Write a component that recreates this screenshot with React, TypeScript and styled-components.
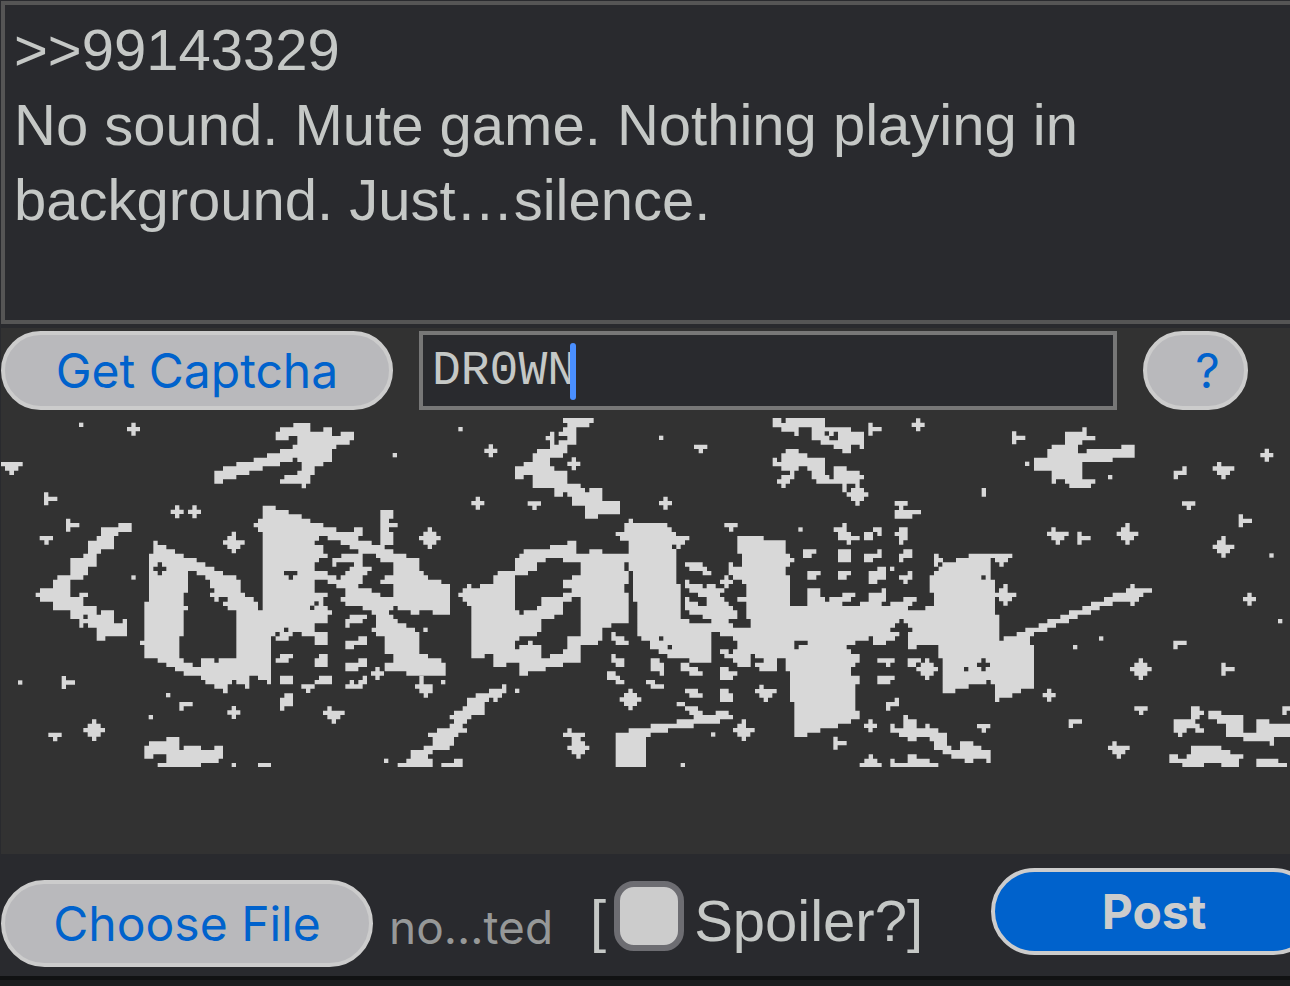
import React from "react";
import styled, { createGlobalStyle, css } from "styled-components";

const GlobalStyle = createGlobalStyle`
  * { box-sizing: border-box; }
  html { background: #1b1e1f; }
  body { margin: 0; overflow-x: hidden; font-family: "Liberation Sans", Arial, sans-serif; }
`;

const Form = styled.form`
  display: flex;
  flex-direction: column;
  overflow: hidden;
  padding: 1px 0 0 1px;
  background: #292a2e;
  border-bottom: 4px solid #111213;
  color: #c5c8c6;
`;

const Comment = styled.textarea`
  display: block;
  width: calc(100% + 24px);
  height: 323px;
  margin: 0 0 4px;
  padding: 7px 9px;
  border: 4px solid #555555;
  border-radius: 0;
  outline: none;
  resize: none;
  overflow: hidden;
  background: #292a2e;
  color: #c5c8c6;
  font: 58px/75px "Liberation Sans", Arial, sans-serif;
`;

const CaptchaPanel = styled.section`
  padding: 3px 0 87px;
  background: #323232;
`;

const CaptchaRow = styled.div`
  display: flex;
  gap: 26px;
  padding-right: 42px;
  margin-bottom: 8px;
`;

const PillButton = styled.button<{ $primary?: boolean; $tall?: boolean }>`
  flex: none;
  height: ${(p) => (p.$tall ? 87 : 79)}px;
  padding: 0 48px;
  border: 4px solid #cccccc;
  border-radius: 44px;
  background: #b9b9bc;
  color: #0062cc;
  font: 400 48px/56px Inter, sans-serif;
  white-space: nowrap;
  ${(p) =>
    p.$primary &&
    css`
      background: #0062cc;
      color: #cccccc;
      font-weight: 700;
    `}
`;

const GetButton = styled(PillButton)`
  width: 392px;
`;

const HelpButton = styled(PillButton)`
  width: 105px;
  padding: 0 0 0 24px;
`;

const ChooseButton = styled(PillButton)`
  width: 372px;
`;

const PostButton = styled(PillButton)`
  width: 326px;
  margin-right: -27px;
  align-self: flex-start;
`;

const Field = styled.div`
  position: relative;
  flex: 1;
`;

const CaptchaInput = styled.input`
  display: block;
  width: 100%;
  height: 79px;
  padding: 0 9px;
  border: 4px solid #777777;
  border-radius: 0;
  outline: none;
  background: #292a2e;
  color: #c5c8c6;
  font: 48px/56px "Liberation Mono", "Courier New", monospace;
`;

const Caret = styled.span`
  position: absolute;
  left: 151px;
  top: 12px;
  width: 6px;
  height: 57px;
  border-radius: 3px;
  background: #4a8fff;
`;

const Challenge = styled.svg`
  display: block;
  width: 100%;
  height: auto;
  fill: #d8d8d8;
`;

const Footer = styled.footer`
  display: flex;
  align-items: flex-end;
  min-height: 122px;
  padding: 14px 0 9px;
`;

const FileName = styled.span`
  width: 202px;
  padding: 0 0 12px 16px;
  color: #969898;
  font: 46px/56px Inter, sans-serif;
  white-space: nowrap;
`;

const Spoiler = styled.label`
  display: flex;
  align-items: center;
  flex: 1;
  height: 92px;
  padding-left: 15px;
  font-size: 58px;
  line-height: 64px;
  white-space: nowrap;
`;

const Check = styled.input`
  appearance: none;
  flex: none;
  width: 70px;
  height: 70px;
  margin: 0 10px 10px 8px;
  border: 6px solid #6d6d72;
  border-radius: 20px;
  background: #cccccc;
`;

type Speck = "dot" | "plus" | "diamond" | "star" | "kite" | "tee" | "side" | "corner";

const speckPath: Record<Speck, string> = {
  dot: "M-7-7h13v13h-13z",
  plus: "M-7-20h13v13h13v13h-13v13h-13v-13h-13v-13h13z",
  diamond: "M-7-33h13v13h13v13h13v13h-13v13h-13v13h-13v-13h-13v-13h-13v-13h13v-13h13z",
  star: "M-7-33h13v26h26v13h-13v13h-13v13h-13v-13h-13v-13h-13v-13h13v-13h13z",
  kite: "M-20-26h13v13h39v13h-13v13h-13v13h-13v-13h-13v-13h-13v-13h13z",
  tee: "M-20-13h40v13h-13v13h-13v-13h-14z",
  side: "M-20-20h13v13h27v13h-27v13h-13z",
  corner: "M-20-13h40v13h-27v13h-13z",
};

type Mark = [Speck, number, number];

const light: Mark[] = [
  ["dot", 244, 45], ["plus", 401, 58], ["side", 152, 267], ["side", 218, 346], ["tee", 139, 391],
  ["plus", 532, 306], ["plus", 584, 306], ["star", 702, 398], ["dot", 401, 503], ["dot", 61, 818],
  ["side", 205, 818], ["dot", 505, 856], ["corner", 558, 889], ["dot", 453, 922], ["plus", 702, 908],
  ["diamond", 283, 961], ["tee", 165, 981], ["dot", 702, 1066], ["tee", 924, 836],
  ["dot", 1382, 58], ["dot", 1185, 136], ["plus", 1473, 123], ["plus", 1434, 280], ["tee", 1603, 287],
  ["diamond", 1290, 385], ["plus", 1722, 162], ["dot", 1277, 660], ["plus", 1133, 791], ["dot", 1330, 817],
  ["dot", 1552, 843], ["diamond", 1892, 869], ["dot", 1159, 1053], ["kite", 1002, 915],
  ["dot", 1984, 84], ["tee", 2102, 117], ["plus", 1997, 280], ["side", 2625, 58], ["plus", 2755, 45],
  ["tee", 2193, 352], ["dot", 2402, 359], ["dot", 2677, 477], ["plus", 2180, 516], ["kite", 2298, 850],
  ["star", 2232, 961], ["dot", 2140, 974], ["dot", 2049, 1066], ["plus", 2612, 948], ["side", 2520, 1000],
  ["diamond", 2782, 778],
  ["side", 3056, 84], ["dot", 3082, 162], ["dot", 3331, 202], ["plus", 3801, 136], ["kite", 3671, 182],
  ["tee", 3566, 287], ["side", 3736, 333], ["kite", 3174, 378], ["side", 3252, 385], ["star", 3383, 372],
  ["star", 3671, 411], ["dot", 3815, 437], ["star", 3017, 555], ["plus", 3749, 568], ["dot", 3841, 634],
  ["dot", 3304, 686], ["dot", 3226, 712], ["corner", 3540, 705], ["diamond", 3423, 778], ["side", 3684, 778],
  ["plus", 3148, 856], ["tee", 3423, 902], ["tee", 2951, 955], ["corner", 3226, 941], ["kite", 3357, 1020],
  ["corner", 3867, 902],
];

const dark: Mark[] = [
  ["plus", 480, 477], ["tee", 872, 496], ["dot", 950, 581], ["dot", 937, 594], ["dot", 859, 660],
  ["dot", 833, 673], ["dot", 257, 621], ["dot", 2023, 411], ["dot", 1984, 686], ["dot", 2010, 712],
  ["dot", 2821, 464], ["dot", 2899, 778], ["dot", 2193, 503], ["dot", 2951, 503], ["plus", 2951, 765],
  ["dot", 2481, 71], ["dot", 2755, 765], ["corner", 2403, 705],
];

const blobs: { x: number; d: string }[] = [
  {
    x: 0,
    d: `M827 65H840V52H880V39H931V65H970V52H996V78H1022V65H1062V91H1049V104H1009V117H996V156H970V169H944V195H931V221H918V235H905V221H840V208H853V195H892V182H905V156H892V143H878V156H840V169H788V182H748V195H709V208H669V221H643V182H669V169H709V156H761V143H801V130H840V117H878V104H892V78H866V91H827Z
    M0 156H68V169H55V182H42V195H28V182H15V169H0Z
    M355 339H395V366H355V378H342V418H303V431H290V470H264V496H250V509H211V561H238V548H264V561H250V588H290V614H303V601H342V640H368V627H381V679H316V692H290V653H264V640H250V653H238V627H211V601H159V575H120V561H107V548H120V535H159V509H172V496H211V444H250V431H264V392H290V378H303V352H355Z
    M460 392H473V405H499V418H525V431H551V444H590V457H616V470H643V483H669V496H709V509H722V548H735V561H761V575H774V601H788V366H774V352H761V339H774V326H788V287H827V300H866V313H905V326H931V339H970V352H1009V366H1062V352H1088V378H1075V392H1115V405H1141V300H1180V326H1167V339H1193V352H1167V366H1180V405H1154V418H1180V431H1219V444H1258V483H1271V496H1284V509H1324V522H1350V614H1298V601H1258V614H1232V601H1193V588H1180V601H1167V614H1180V627H1193V640H1219V653H1245V666H1258V732H1284V745H1324V758H1337V797H1219V784H1154V758H1180V732H1154V679H1128V666H1115V653H1128V614H1115V601H1088V588H1036V575H1022V561H1036V535H1009V522H983V509H944V548H983V561H970V588H983V601H996V614H983V640H944V679H905V666H878V679H866V692H827V679H813V823H801V810H774V797H748V836H735V823H709V810H696V823H683V850H669V836H643V823H616V810H603V797H551V784H525V771H499V758H473V745H433V705H420V692H433V575H447V431H460Z
    M957 378H983V391H1022V405H1049V418H1075V431H1024V444H997V470H1009V457H1062V470H1049V483H1036V496H1022V509H1009V496H983V483H944V457H957V444H983V431H970V405H944V392H957Z
    M1088 431H1128V444H1141V457H1180V496H1154V509H1141V522H1180V561H1141V548H1115V535H1075V522H1088V496H1102V483H1115V470H1088Z
    M564 483H590V496H616V509H630V535H643V548H630V561H643V575H656V561H683V575H669V588H683V601H709V745H656V758H643V745H603V771H578V758H551V745H538V679H551V601H564V588H551V548H564Z
    M944 666H983V705H944Z M840 732H879V745H866V758H827V745H840Z M957 732H983V771H944V745H957Z M840 797H879V823H840Z M957 797H996V823H944V810H957Z M853 850H879V889H853V902H840V863H853Z
    M499 981H538V1020H551V1007H603V1020H643V1007H669V1046H656V1059H603V1072H473V1059H499V1033H460V1046H433V1007H447V994H499Z M774 1059H813V1072H774Z`,
  },
  {
    x: 960,
    d: `M729 24H821V39H808V52H769V104H742V130H729V143H690V169H703V182H742V221H782V234H795V247H808V234H847V273H900V313H834V326H795V287H756V260H742V247H729V260H703V234H638V195H611V208H585V169H611V156H638V130H651V117H690V91H677V78H690V65H703V104H716V91H742V78H716V65H729V52H742V39H729Z
    M89 614H141V627H128V640H89V653H76V627H89Z M115 679H141V705H102V718H76V692H115Z M115 745H141V771H115V784H76V758H115Z M89 810H102V823H115V810H128V797H141V823H128V836H76V823H89Z
    M298 797H311V823H338V850H324V863H311V850H298V836H285V823H298Z
    M546 823H559V850H546V863H533V876H520V863H507V876H494V915H454V928H441V941H428V955H441V968H415V981H402V1007H389V1020H338V1033H324V1046H338V1072H233V1059H259V1046H272V1020H311V1007H338V981H324V968H351V955H389V941H402V928H389V915H402V902H428V889H441V863H467V850H507V836H546Z
    M402 1046H428V1072H364V1059H402Z
    M742 955H755V968H795V981H782V994H795V1007H808V1020H795V1033H782V1046H769V1033H755V1020H742V1007H755V981H729V968H742Z
    M874 666H887V679H913V692H926V705H887V692H874Z M874 732H887V745H913V771H887V758H874Z M861 784H887V797H900V810H913V823H887V810H861Z
    M441 522H454V535H480V522H520V496H533V483H585V444H598V431H611V418H690V405H742V392H769V431H808V418H847V431H926V392H900V378H887V366H913V339H926V326H939V339H1042V352H1055V366H1068V378H1108V391H1095V404H1082V417H1069V522H1082V627H1108V640H1174V627H1148V614H1108V601H1095V561H1108V575H1134V588H1160V561H1134V548H1108V535H1095V509H1108V522H1148V535H1160V522H1187V535H1213V548H1200V561H1213V575H1226V588H1239V601H1252V627H1226V640H1239V653H1292V627H1279V575H1252V561H1279V522H1266V509H1239V496H1226V457H1239V470H1266V431H1252V378H1331V391H1397V431H1410V444H1423V457H1410V470H1397V496H1410V588H1462V535H1501V561H1515V575H1528V561H1567V548H1606V561H1593V575H1567V588H1620V575H1646V548H1685V535H1698V575H1685V588H1711V575H1750V561H1790V575H1777V588H1764V601H1816V588H1842V548H1829V496H1842V483H1856V470H1842V431H1856V444H1869V457H1908V444H1946V431H2077V444H2064V457H2051V470H2038V457H2025V444H2012V509H2025V614H2038V692H2051V679H2090V666H2116V653H2156V640H2182V627H2221V614H2247V601H2287V588H2313V575H2352V561H2378V548H2418V535H2431V522H2444V535H2496V548H2470V561H2457V575H2444V588H2431V575H2378V588H2339V601H2313V614H2273V627H2247V640H2208V653H2182V666H2142V679H2130V705H2142V836H2103V850H2077V863H2038V876H2025V823H2012V810H1999V823H1946V836H1906V850H1868V745H1855V705H1790V718H1764V666H1777V653H1764V640H1751V627H1738V640H1725V653H1711V666H1738V679H1725V692H1698V705H1659V679H1646V692H1606V705H1580V718H1593V732H1619V758H1606V771H1593V797H1619V823H1606V902H1619V928H1593V941H1554V955H1501V968H1462V981H1423V876H1410V784H1397V745H1371V784H1318V771H1305V758H1331V745H1305V732H1292V771H1252V758H1239V745H1213V732H1200V718H1226V732H1239V718H1252V692H1239V679H1200V666H1174V758H1108V745H1042V732H1016V718H990V692H964V679H952V575H939V483H926V457H913V483H926V522H913V548H926V640H874V653H847V692H834V705H782V758H729V771H677V784H624V797H598V758H559V771H520V732H494V745H454V588H441V575H428V561H415V548H428V535H441Z
    M677 444H729V457H782V496H756V509H729V535H755V548H729V561H704V561H664V588H651V601H611V614H598V601H585V496H624V483H651V457H677Z
    M755 561H782V679H742V718H729V732H690V745H664V705H638V692H624V705H598V718H585V692H598V679H651V666H664V627H703V614H729V575H755Z`,
  },
  {
    x: 1920,
    d: `M398 24H424V39H437V24H555V52H633V65H672V117H659V104H633V130H607V117H581V104H542V91H515V52H476V78H463V65H424V52H398Z M581 65H594V91H568V78H581Z
    M437 117H476V130H502V143H555V195H568V208H581V169H620V182H659V195H672V208H659V234H672V247H685V260H672V273H659V287H646V273H633V260H620V247H633V234H646V221H620V247H607V221H529V208H515V182H502V169H476V182H463V208H450V221H437V234H424V221H411V208H424V195H450V182H424V169H398V143H411V156H424V130H437Z
    M764 273H803V287H790V300H843V313H817V326H764V300H777V287H764Z
    M607 339H620V366H633V378H659V391H633V404H620V391H594V366H581V352H607Z M699 352H725V378H712V366H699V391H672V366H699Z M777 352H803V391H790V404H777V378H764V366H777Z
    M489 418H529V431H515V444H489Z M594 418H633V457H594Z M712 418H725V444H699V457H672V431H712Z M790 418H817V444H790V457H777V431H790Z
    M502 483H542V496H529V509H502Z M594 483H633V496H620V509H594Z M712 470H738V509H712V522H686V483H712Z M803 483H817V509H803V522H790V509H777V496H803Z
    M135 457H188V470H201V483H214V496H188V483H148V470H135Z
    M32 745H59V758H72V797H59V784H32Z M122 758H148V771H174V784H188V797H148V784H122Z M240 771H266V784H292V797H279V810H240Z M18 810H45V823H72V836H32V823H18Z M135 836H174V850H188V863H148V850H135Z M240 836H266V850H279V876H240Z
    M110 876H135V889H174V902H188V915H227V902H266V915H279V928H240V941H161V955H84V968H32V981H18V1072H-73V968H-34V955H32V941H110V928H161V915H148V902H135V889H110Z
    M712 745H764V758H751V771H738V758H712Z M712 797H764V810H751V823H712Z M803 745H843V758H830V771H803Z M764 863H777V889H751V902H738V876H764Z
    M686 1033H699V1046H712V1059H725V1072H659V1059H673V1046H686Z M751 1046H764V1059H803V1033H830V1046H869V1059H895V1072H751Z
    M790 915H804V928H830V955H856V941H869V955H895V968H921V1007H934V1020H960V994H1000V1007H1024V1020H1052V1059H1039V1046H1000V1059H974V1046H934V1033H908V1020H882V994H869V981H830V994H803V981H777V968H751V941H764V955H790Z`,
  },
  {
    x: 2880,
    d: `M222 143H262V117H275V104H315V65H367V52H380V78H406V91H367V104H354V130H380V117H484V104H524V143H458V156H367V208H406V221H393V234H328V221H315V208H288V221H275V182H222Z
    M65 234h13v26h-13z M667 169H680V195H654V208H641V182H667Z
    M693 889H719V902H732V915H719V928H706V941H719V955H732V968H706V955H680V968H667V981H654V968H641V928H693Z
    M745 902H784V915H850V968H889V928H928V941H1020V981H942V1007H929V994H850V981H798V941H771V928H745Z
    M693 1007H784V1020H811V1033H850V1046H837V1072H784V1059H732V1072H667V1059H628V1033H654V1046H680V1033H693Z
    M889 1046H955V1059H981V1072H889Z`,
  },
];

function Marks({ items }: { items: Mark[] }) {
  return (
    <>
      {items.map(([kind, x, y]) => (
        <path key={`${x}-${y}`} d={speckPath[kind]} transform={`translate(${x} ${y})`} />
      ))}
    </>
  );
}

function CaptchaImage() {
  return (
    <Challenge viewBox="3 0 3867 1048" role="img" aria-label="Captcha challenge">
      <g transform="translate(0 -24)">
        {blobs.map((b) => (
          <path key={b.x} d={b.d} fillRule="evenodd" transform={`translate(${b.x} 0)`} />
        ))}
        <Marks items={light} />
        <g fill="#323232">
          <Marks items={dark} />
        </g>
      </g>
    </Challenge>
  );
}

export default function App() {
  return (
    <>
      <GlobalStyle />
      <Form onSubmit={(e) => e.preventDefault()}>
        <Comment
          aria-label="Comment"
          spellCheck={false}
          defaultValue={">>99143329\nNo sound. Mute game. Nothing playing in background. Just…silence."}
        />
        <CaptchaPanel>
          <CaptchaRow>
            <GetButton type="button">Get Captcha</GetButton>
            <Field>
              <CaptchaInput aria-label="Captcha response" spellCheck={false} defaultValue="DR0WN" />
              <Caret />
            </Field>
            <HelpButton type="button">?</HelpButton>
          </CaptchaRow>
          <CaptchaImage />
        </CaptchaPanel>
        <Footer>
          <ChooseButton type="button" $tall>Choose File</ChooseButton>
          <FileName>no...ted</FileName>
          <Spoiler>
            [<Check type="checkbox" />Spoiler?]
          </Spoiler>
          <PostButton type="submit" $primary $tall>Post</PostButton>
        </Footer>
      </Form>
    </>
  );
}
